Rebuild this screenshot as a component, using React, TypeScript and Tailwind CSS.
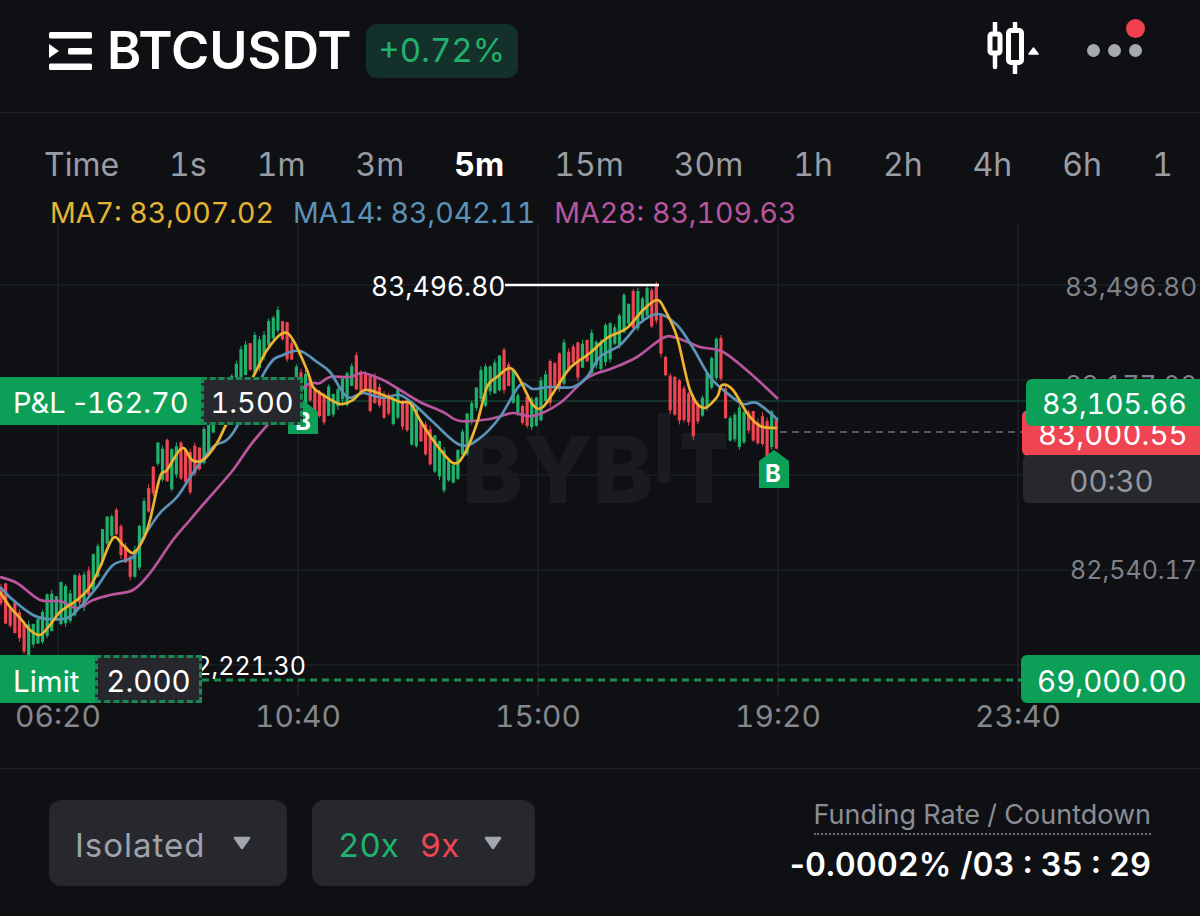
import React from 'react';

type Pt = [number, number];

const PITCH = 4.615;

const pricePath: Pt[] = [
  [0, 598], [10, 612], [20, 625], [28, 645], [34, 635], [40, 625], [50, 612], [60, 605], [75, 600], [85, 585], [95, 565],
  [105, 535], [115, 520], [125, 550], [132, 570], [140, 540], [150, 490], [158, 455], [170, 465], [182, 455],
  [190, 470], [205, 445], [215, 415], [228, 395], [240, 365], [255, 355], [270, 335], [280, 318], [290, 350],
  [300, 385], [312, 395], [325, 405], [340, 395], [355, 372], [368, 385], [385, 410], [400, 405], [415, 425],
  [430, 450], [445, 470], [455, 470], [465, 440], [472, 410], [480, 385], [490, 385], [498, 368], [507, 372],
  [515, 395], [525, 415], [535, 410], [548, 382], [560, 372], [568, 358], [578, 362], [588, 345], [600, 352],
  [612, 345], [622, 322], [632, 308], [645, 306], [655, 302], [663, 340], [668, 385], [678, 395], [690, 415],
  [700, 412], [708, 385], [715, 358], [722, 362], [728, 430], [738, 432], [745, 420], [755, 425], [762, 432],
  [770, 435], [778, 435],
];

const ma7: Pt[] = [
  [0, 592], [10, 607], [20, 618], [30, 630], [40, 635], [50, 625], [60, 612], [77, 600], [90, 587], [100, 567],
  [113, 538], [123, 545], [133, 553], [143, 540], [150, 520], [160, 477], [167, 470], [182, 448], [192, 460],
  [203, 460], [217, 443], [227, 423], [253, 377], [267, 350], [283, 333], [293, 340], [307, 370], [313, 387],
  [323, 395], [340, 404], [353, 400], [365, 390], [383, 395], [400, 402], [410, 403], [420, 420], [433, 440],
  [453, 463], [465, 453], [477, 423], [487, 387], [497, 377], [510, 368], [520, 380], [533, 405], [543, 407],
  [557, 387], [570, 368], [590, 353], [607, 338], [627, 328], [643, 310], [657, 300], [665, 310], [677, 337],
  [690, 390], [703, 408], [717, 397], [722, 385], [733, 390], [747, 413], [760, 426], [777, 428],
];

const ma14: Pt[] = [
  [0, 587], [13, 600], [33, 615], [47, 619], [67, 618], [80, 607], [97, 587], [113, 565], [133, 557], [143, 538],
  [160, 513], [177, 497], [193, 473], [213, 447], [233, 433], [267, 368], [283, 355], [300, 351], [317, 362],
  [330, 372], [347, 397], [363, 393], [383, 398], [400, 395], [417, 407], [433, 422], [460, 445], [480, 438],
  [500, 417], [520, 385], [533, 389], [550, 387], [573, 387], [587, 377], [600, 357], [620, 345], [640, 323],
  [658, 314], [677, 325], [693, 348], [710, 377], [727, 393], [743, 404], [757, 403], [778, 420],
];

const ma28: Pt[] = [
  [0, 577], [17, 583], [40, 600], [60, 601], [77, 608], [93, 600], [110, 595], [133, 590], [150, 573], [173, 540],
  [190, 520], [207, 500], [233, 470], [257, 437], [303, 388], [320, 383], [330, 377], [350, 377], [363, 373],
  [383, 380], [400, 390], [420, 402], [443, 412], [460, 421], [490, 419], [513, 413], [533, 416], [560, 403],
  [587, 378], [613, 368], [637, 357], [663, 338], [677, 338], [700, 347], [723, 352], [750, 373], [778, 399],
];

const tabs = ['Time', '1s', '1m', '3m', '5m', '15m', '30m', '1h', '2h', '4h', '6h', '1'];
const timeLabels: [string, string][] = [
  ['06:20', 'left-[58px]'],
  ['10:40', 'left-[298px]'],
  ['15:00', 'left-[538px]'],
  ['19:20', 'left-[778px]'],
  ['23:40', 'left-[1018px]'],
];

function rand(i: number) {
  const s = Math.sin(i * 12.9898) * 43758.5453;
  return s - Math.floor(s);
}

function interp(path: Pt[], x: number) {
  for (let i = 1; i < path.length; i++) {
    if (x <= path[i][0]) {
      const [x0, y0] = path[i - 1];
      const [x1, y1] = path[i];
      return y0 + ((y1 - y0) * (x - x0)) / (x1 - x0);
    }
  }
  return path[path.length - 1][1];
}

function smooth(pts: Pt[]) {
  let d = `M${pts[0][0]} ${pts[0][1]}`;
  for (let i = 0; i < pts.length - 1; i++) {
    const p0 = pts[Math.max(i - 1, 0)];
    const p1 = pts[i];
    const p2 = pts[i + 1];
    const p3 = pts[Math.min(i + 2, pts.length - 1)];
    const c1x = p1[0] + (p2[0] - p0[0]) / 6;
    const c1y = p1[1] + (p2[1] - p0[1]) / 6;
    const c2x = p2[0] - (p3[0] - p1[0]) / 6;
    const c2y = p2[1] - (p3[1] - p1[1]) / 6;
    d += ` C${c1x.toFixed(1)} ${c1y.toFixed(1)} ${c2x.toFixed(1)} ${c2y.toFixed(1)} ${p2[0]} ${p2[1]}`;
  }
  return d;
}

const candles = Array.from({ length: 169 }, (_, i) => {
  const x = i * PITCH + 1;
  const mid = interp(pricePath, x) + (rand(i + 300) - 0.5) * 12;
  const slope = interp(pricePath, x + 6) - interp(pricePath, x - 6);
  const h = 16 + rand(i) * 26;
  const up = slope < 0 ? rand(i + 500) > 0.2 : rand(i + 500) > 0.8;
  return { x, top: mid - h / 2, h, up, w1: rand(i + 90) * 4, w2: rand(i + 190) * 4 };
});

const Caret = () => (
  <svg width="20" height="16" viewBox="0 0 20 16" className="shrink-0">
    <path d="M3 3H17L10 13Z" fill="#a3a6ae" stroke="#a3a6ae" strokeWidth="2.5" strokeLinejoin="round" />
  </svg>
);

const Chart = () => (
  <svg viewBox="0 224 1200 544" className="absolute inset-0 w-full h-full">
    {[285, 380, 475, 570, 665].map((y) => (
      <line key={y} x1="0" x2="1200" y1={y} y2={y} stroke="#1d1f24" strokeWidth="1.5" />
    ))}
    {[58, 298, 538, 778, 1018].map((x) => (
      <line key={x} x1={x} x2={x} y1="224" y2="696" stroke="#1d1f24" strokeWidth="1.5" />
    ))}
    <line x1="300" x2="1026" y1="401" y2="401" stroke="#16332a" strokeWidth="2" />

    <text x="462" y="503" fontFamily="Inter, sans-serif" fontWeight="800" fontSize="92" fill="#1a1b20">
      BYB
    </text>
    <rect x="658" y="413" width="12" height="69" fill="#1a1b20" />
    <rect x="682" y="433" width="44" height="16" fill="#1a1b20" />
    <rect x="696" y="433" width="16" height="70" fill="#1a1b20" />

    {candles.map((c, i) => {
      const color = c.up ? '#20b26c' : '#ef4552';
      return (
        <g key={i}>
          <line x1={c.x} x2={c.x} y1={c.top - c.w1} y2={c.top + c.h + c.w2} stroke={color} strokeWidth="1" />
          <rect x={c.x - 1.6} y={c.top} width="3.2" height={c.h} fill={color} />
        </g>
      );
    })}

    <path d={smooth(ma28)} fill="none" stroke="#b9559f" strokeWidth="2.7" />
    <path d={smooth(ma14)} fill="none" stroke="#5b93b8" strokeWidth="2.7" />
    <path d={smooth(ma7)} fill="none" stroke="#edb22f" strokeWidth="2.7" />

    <line x1="505" x2="659" y1="285" y2="285" stroke="#ffffff" strokeWidth="2.5" />
    <line x1="780" x2="1022" y1="432" y2="432" stroke="#6b6d73" strokeWidth="1.5" strokeDasharray="7 5" />
    <line x1="202" x2="1022" y1="680" y2="680" stroke="#168a52" strokeWidth="3" strokeDasharray="7 5" />

    <path d="M288 412L303 400L318 412V434H288Z" fill="#0b9f57" />
    <path d="M759 461L774 450L789 461V488H759Z" fill="#0b9f57" />
  </svg>
);

export default function App() {
  return (
    <div className="w-[1200px] h-[916px] overflow-hidden flex flex-col bg-[#0f1014] text-white tabular-nums font-['Inter',sans-serif]">
      {/* header */}
      <div className="h-[113px] shrink-0 flex items-center pl-[49px] pr-[58px] pb-[10px] border-b border-[#202228]">
        <svg width="43" height="38" viewBox="0 0 43 38" className="shrink-0">
          <rect x="0" y="0" width="43" height="6.5" rx="1.5" fill="#fff" />
          <rect x="19" y="16" width="24" height="6.5" rx="1.5" fill="#fff" />
          <rect x="0" y="31.5" width="43" height="6.5" rx="1.5" fill="#fff" />
          <path d="M0 12L10 19L0 26Z" fill="#fff" />
        </svg>
        <span className="ml-[15px] text-[52px] leading-none font-semibold">BTCUSDT</span>
        <span className="ml-[14px] h-[54px] w-[152px] rounded-[11px] bg-[#14302a] flex items-center justify-center text-[33px] text-[#20b26c]">
          +0.72%
        </span>
        <svg width="52" height="52" viewBox="0 0 52 52" className="ml-auto -mt-[7px] shrink-0">
          <path d="M8 1V45" stroke="#fff" strokeWidth="4.5" strokeLinecap="round" />
          <rect x="3" y="12" width="10" height="19" rx="2" fill="#0f1014" stroke="#fff" strokeWidth="5" />
          <path d="M28 1V51" stroke="#fff" strokeWidth="4.5" strokeLinecap="round" />
          <rect x="21.5" y="8.5" width="13" height="32" rx="2.5" fill="#0f1014" stroke="#fff" strokeWidth="5" />
          <path d="M42 32H51L46.5 26Z" fill="#fff" stroke="#fff" strokeWidth="1.5" strokeLinejoin="round" />
        </svg>
        <div className="relative ml-[48px] -mt-[2px] flex gap-[8px]">
          <span className="w-[13px] h-[13px] rounded-full bg-[#a6a9ae]" />
          <span className="w-[13px] h-[13px] rounded-full bg-[#a6a9ae]" />
          <span className="w-[13px] h-[13px] rounded-full bg-[#a6a9ae]" />
          <span className="absolute right-[-3px] top-[-25px] w-[19px] h-[19px] rounded-full bg-[#f0404e]" />
        </div>
      </div>

      {/* intervals */}
      <div className="mt-[32px] pl-[44px] h-[40px] flex items-center gap-[50px] text-[32px] leading-none text-[#9a9da3] whitespace-nowrap overflow-hidden">
        {tabs.map((t) => (
          <span key={t} className={t === '5m' ? 'text-white font-bold' : ''}>
            {t}
          </span>
        ))}
      </div>

      {/* moving averages */}
      <div className="mt-[17px] pl-[50px] h-[22px] flex items-center gap-[19px] text-[28.5px] leading-none whitespace-nowrap">
        <span className="text-[#e5b437]">MA7: 83,007.02</span>
        <span className="text-[#5b93b8]">MA14: 83,042.11</span>
        <span className="text-[#b9559f]">MA28: 83,109.63</span>
      </div>

      {/* chart */}
      <div className="relative h-[544px] shrink-0 overflow-hidden text-[29.5px] leading-none">
        <Chart />

        <span className="absolute right-[3px] top-[50px] text-[26px] text-[#7f8289]">83,496.80</span>
        <span className="absolute right-[3px] top-[148px] text-[26px] text-[#7f8289]">83,177.00</span>
        <span className="absolute right-[3px] top-[334px] text-[25px] text-[#7f8289]">82,540.17</span>

        <span className="absolute left-[371px] top-[49px] text-[26.5px] text-white">83,496.80</span>
        <span className="absolute right-[894px] top-[430px] text-[25px] text-white">82,221.30</span>

        <span className="absolute left-[765px] top-[238px] text-[24px] font-bold text-white">B</span>
        <span className="absolute left-[295px] top-[186px] text-[24px] font-bold text-white">B</span>

        {/* position tag */}
        <div className="absolute left-0 top-[153px] h-[48px] flex items-stretch text-[29px]">
          <div className="w-[201px] pl-[13px] pt-[3px] flex items-center bg-[#0b9f57] text-white whitespace-pre">
            P&amp;L <span className="normal-nums">-</span>162.70
          </div>
          <div className="w-[102px] pt-[3px] flex items-center justify-center bg-[#26282d] border-[3px] border-dashed border-[#168a52] text-white">1.500</div>
        </div>

        {/* limit tag */}
        <div className="absolute left-0 top-[431px] h-[48px] flex items-stretch">
          <div className="w-[95px] pl-[13px] pt-[5px] flex items-center bg-[#0b9f57] text-white">Limit</div>
          <div className="w-[107px] pt-[5px] flex items-center justify-center bg-[#26282d] border-[3px] border-dashed border-[#168a52] text-white">2.000</div>
        </div>

        {/* price tags */}
        <div className="absolute left-[1022px] top-[186px] w-[178px] h-[46px] pl-[16px] pt-[3px] flex items-center rounded-l-[6px] bg-[#ef4552] text-white">83,000.55</div>
        <div className="absolute left-[1023px] top-[231px] w-[177px] h-[48px] pt-[5px] flex items-center justify-center rounded-l-[6px] bg-[#26282d] text-[#94979e]">00:30</div>
        <div className="absolute left-[1026px] top-[155px] w-[174px] h-[47px] pl-[16px] pt-[3px] flex items-center rounded-l-[6px] bg-[#0b9f57] text-[28.5px] text-white">83,105.66</div>
        <div className="absolute left-[1021px] top-[431px] w-[179px] h-[48px] pl-[16px] pt-[5px] flex items-center rounded-l-[6px] bg-[#0b9f57] text-white">69,000.00</div>

        {timeLabels.map(([label, pos]) => (
          <span key={label} className={`absolute top-[477px] -translate-x-1/2 text-[30px] text-[#85878d] ${pos}`}>
            {label}
          </span>
        ))}
      </div>

      {/* footer */}
      <div className="flex-1 border-t border-[#202228] flex items-start pl-[49px] pr-[49px] pt-[31px]">
        <button className="w-[238px] h-[86px] rounded-[12px] bg-[#26282d] flex items-center pl-[26px] text-[33px] tracking-[1px] text-[#9fa2aa]">
          <span className="mt-[5px]">Isolated</span>
          <span className="ml-[26px]"><Caret /></span>
        </button>
        <button className="ml-[25px] w-[223px] h-[86px] rounded-[12px] bg-[#26282d] flex items-center pl-[26px] text-[33px]">
          <span className="mt-[5px] text-[#20b26c]">20x</span>
          <span className="mt-[5px] ml-[21px] text-[#ef4552]">9x</span>
          <span className="ml-[24px]"><Caret /></span>
        </button>
        <div className="ml-auto flex flex-col items-end">
          <span className="mt-[-1px] pb-[2px] text-[27px] leading-[32px] text-[#8a8d94] border-b-2 border-dotted border-[#6b6d73]">
            Funding Rate / Countdown
          </span>
          <span className="mt-[10px] text-[32.5px] leading-[40px] font-semibold whitespace-nowrap">
            <span className="normal-nums">-</span>0.0002% /03 : 35 : 29
          </span>
        </div>
      </div>
    </div>
  );
}
